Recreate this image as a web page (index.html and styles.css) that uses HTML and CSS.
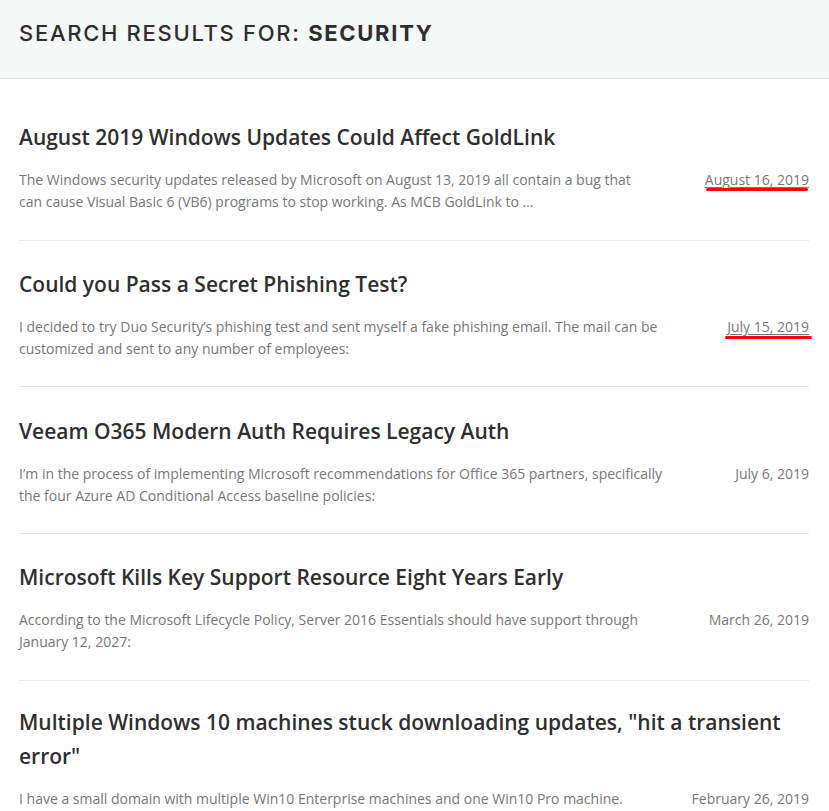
FILE: index.html
```html
<!DOCTYPE html>
<html>
<head>
<meta charset="utf-8">
<link rel="stylesheet" href="styles.css">
</head>
<body>
<header class="page-header">
  <h1 class="page-title">Search Results for: <span class="term">Security</span></h1>
</header>
<main class="results">
  <article class="result">
    <h2 class="result-title">August 2019 Windows Updates Could Affect GoldLink</h2>
    <div class="result-row">
      <p class="excerpt">The Windows security updates released by Microsoft on August 13, 2019 all contain a bug that can cause Visual Basic 6 (VB6) programs to stop working. As MCB GoldLink to …</p>
      <div class="date"><span class="date-link">August 16, 2019</span><span class="mark mark-1"></span></div>
    </div>
  </article>
  <article class="result">
    <h2 class="result-title">Could you Pass a Secret Phishing Test?</h2>
    <div class="result-row">
      <p class="excerpt">I decided to try Duo Security’s phishing test and sent myself a fake phishing email. The mail can be customized and sent to any number of employees:</p>
      <div class="date"><span class="date-link">July 15, 2019</span><span class="mark mark-2"></span></div>
    </div>
  </article>
  <article class="result">
    <h2 class="result-title">Veeam O365 Modern Auth Requires Legacy Auth</h2>
    <div class="result-row">
      <p class="excerpt">I’m in the process of implementing Microsoft recommendations for Office 365 partners, specifically the four Azure AD Conditional Access baseline policies:</p>
      <div class="date">July 6, 2019</div>
    </div>
  </article>
  <article class="result">
    <h2 class="result-title">Microsoft Kills Key Support Resource Eight Years Early</h2>
    <div class="result-row">
      <p class="excerpt">According to the Microsoft Lifecycle Policy, Server 2016 Essentials should have support through January 12, 2027:</p>
      <div class="date">March 26, 2019</div>
    </div>
  </article>
  <article class="result">
    <h2 class="result-title">Multiple Windows 10 machines stuck downloading updates, "hit a transient error"</h2>
    <div class="result-row">
      <p class="excerpt">I have a small domain with multiple Win10 Enterprise machines and one Win10 Pro machine. Everything has been stuck downloading the same cumulative update for weeks.</p>
      <div class="date">February 26, 2019</div>
    </div>
  </article>
</main>
</body>
</html>
```
FILE: styles.css
```css
html, body {
  margin: 0;
  padding: 0;
  background: #ffffff;
  overflow: hidden;
}
body {
  font-family: "Open Sans", "Noto Sans", sans-serif;
  color: #333;
}
.page-header {
  background: #f6f7f7;
  border-bottom: 1px solid #e6e8e8;
  height: 78px;
  padding: 0 19px;
  display: flex;
  align-items: center;
  box-sizing: content-box;
}
.page-title {
  margin: 0;
  margin-top: -12px;
  font-family: "Inter", "Noto Sans", sans-serif;
  font-weight: 500;
  font-size: 22px;
  letter-spacing: 1.7px;
  text-transform: uppercase;
  color: #2e2e30;
}
.page-title .term {
  font-weight: 700;
}
.results {
  padding: 15px 20px 0 19px;
}
.result {
  padding: 26.2px 0 26.5px;
  border-bottom: 1px solid #e8e8e8;
}
.result:last-child {
  padding-top: 24.2px;
}
.result-title {
  margin: 0 0 15px;
  font-size: 21px;
  line-height: 34px;
  font-weight: 600;
  color: #2f2f2f;
}
.result-row {
  display: flex;
  justify-content: space-between;
  align-items: flex-start;
  gap: 60px;
}
.excerpt {
  margin: 0;
  flex: 1;
  font-size: 14px;
  line-height: 22px;
  color: #777;
}
.date {
  position: relative;
  font-size: 14px;
  line-height: 22px;
  color: #777;
  white-space: nowrap;
}
.date-link {
  text-decoration: underline;
  text-underline-offset: 2px;
}
.mark {
  position: absolute;
  height: 3px;
  background: #ff0000;
  border-radius: 2px;
}
.mark-1 {
  left: 1px;
  right: 1px;
  top: 19px;
}
.mark-2 {
  left: -2px;
  right: -3px;
  top: 20px;
}
```
